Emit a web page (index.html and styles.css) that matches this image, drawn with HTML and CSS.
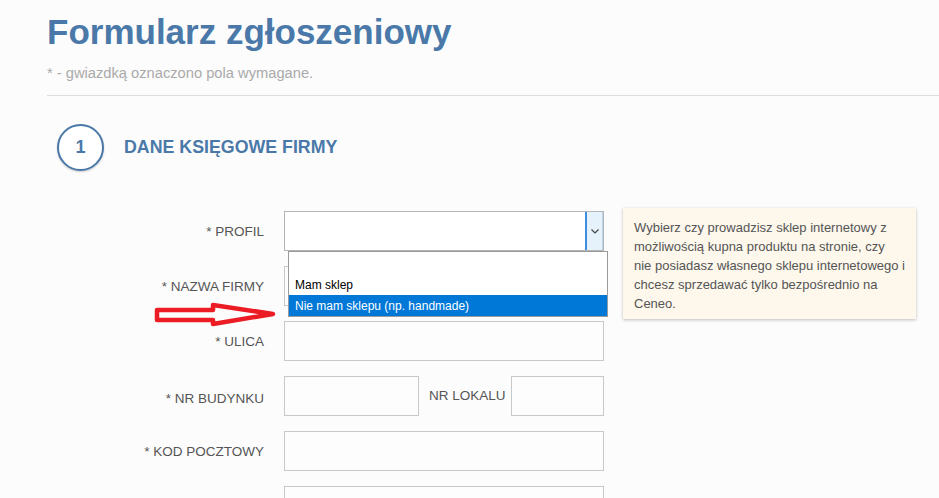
FILE: index.html
```html
<!DOCTYPE html>
<html lang="pl">
<head>
  <meta charset="utf-8">
  <title>Formularz zgłoszeniowy</title>
  <link rel="stylesheet" href="styles.css">
</head>
<body>
  <div class="page">
    <div class="page-head">
      <h1>Formularz zgłoszeniowy</h1>
      <p class="note">* - gwiazdką oznaczono pola wymagane.</p>
    </div>

    <div class="step">
      <div class="step-head">
        <span class="step-num">1</span>
        <h2>DANE KSIĘGOWE FIRMY</h2>
      </div>

      <div class="step-body">
        <div class="fields">
          <div class="row">
            <label class="row-label">* PROFIL</label>
            <div class="select">
              <span class="select-btn">
                <svg width="8" height="5" viewBox="0 0 8 5"><path d="M0.5 0.5 L4 4 L7.5 0.5" fill="none" stroke="#444" stroke-width="1.2"/></svg>
              </span>
              <ul class="select-list">
                <li></li>
                <li>Mam sklep</li>
                <li class="active">Nie mam sklepu (np. handmade)</li>
              </ul>
            </div>
          </div>
          <div class="row">
            <label class="row-label">* NAZWA FIRMY</label>
            <div class="input"></div>
          </div>
          <div class="row">
            <label class="row-label">* ULICA</label>
            <div class="input"></div>
          </div>
          <div class="row">
            <label class="row-label label-low">* NR BUDYNKU</label>
            <div class="pair">
              <div class="input input-short"></div>
              <label class="pair-label">NR LOKALU</label>
              <div class="input input-tail"></div>
            </div>
          </div>
          <div class="row">
            <label class="row-label">* KOD POCZTOWY</label>
            <div class="input"></div>
          </div>
          <div class="row">
            <label class="row-label"></label>
            <div class="input"></div>
          </div>
        </div>

        <div class="hint">
          Wybierz czy prowadzisz sklep internetowy z<br>
          możliwością kupna produktu na stronie, czy<br>
          nie posiadasz własnego sklepu internetowego i<br>
          chcesz sprzedawać tylko bezpośrednio na<br>
          Ceneo.
        </div>
      </div>
    </div>

    <svg class="mark" width="130" height="34" viewBox="150 296 130 34">
      <polygon points="157,310 213,310 213,305 273,314 213,324 213,320 157,320" fill="none" stroke="#ec1c24" stroke-width="4.5" stroke-linejoin="round"/>
    </svg>
  </div>
</body>
</html>
```

FILE: styles.css
```css
html, body {
  margin: 0;
  padding: 0;
  background: #fcfcfc;
  font-family: "Liberation Sans", Arial, sans-serif;
  overflow: hidden;
}

.page {
  position: relative;
  padding-left: 47px;
}

.page-head {
  border-bottom: 1px solid #dddddd;
  padding-bottom: 12px;
}

h1 {
  margin: 0;
  padding-top: 10px;
  font-size: 35px;
  line-height: 44px;
  font-weight: bold;
  color: #4a79a9;
}

.note {
  margin: 9px 0 0;
  font-size: 14.7px;
  line-height: 20px;
  color: #aaaaaa;
}

.step-head {
  display: flex;
  align-items: center;
  margin: 28px 0 0 10px;
}

.step-num {
  display: flex;
  align-items: center;
  justify-content: center;
  width: 43px;
  height: 43px;
  border: 2px solid #4a79a9;
  border-radius: 50%;
  background: #fff;
  box-shadow: 0 1px 2px rgba(0,0,0,.2);
  font-size: 18px;
  font-weight: bold;
  color: #4a79a9;
}

.step-head h2 {
  margin: 0 0 0 20px;
  font-size: 17.8px;
  font-weight: bold;
  color: #4a79a9;
}

.step-body {
  display: flex;
  align-items: flex-start;
  margin-top: 40px;
}

.fields {
  width: 557px;
}

.row {
  display: flex;
  align-items: center;
  margin-bottom: 15px;
}

.row-label {
  width: 217px;
  margin-right: 20px;
  text-align: right;
  font-size: 13.5px;
  color: #555555;
}

.label-low {
  padding-top: 4px;
}

.input,
.select {
  box-sizing: border-box;
  width: 320px;
  height: 40px;
  border: 1px solid #c8c8c8;
  background: #fdfdfd;
}

.select {
  position: relative;
  display: flex;
  justify-content: flex-end;
  border-color: #b4b4b4;
  background: #fff;
}

.select-btn {
  display: flex;
  align-items: center;
  justify-content: center;
  width: 15px;
  border-left: 2px solid #3d8ee0;
  border-right: 1px solid #bcd6f0;
  background: #e5f1fb;
}

.select-list {
  position: absolute;
  top: 39px;
  left: 3px;
  width: 320px;
  box-sizing: border-box;
  margin: 0;
  padding: 0;
  list-style: none;
  border: 1px solid #9a9a9a;
  background: #fff;
  font-size: 12px;
  color: #000;
  z-index: 2;
}

.select-list li {
  height: 21px;
  line-height: 22px;
  padding-left: 6px;
}

.select-list li:first-child {
  height: 22px;
}

.select-list li.active {
  background: #0078d7;
  color: #fff;
}

.pair {
  display: flex;
  align-items: center;
  width: 320px;
}

.input-short {
  width: 135px;
}

.pair-label {
  margin-left: 10px;
  padding-bottom: 2px;
  font-size: 13.5px;
  color: #555555;
}

.input-tail {
  width: 93px;
  margin-left: auto;
}

.hint {
  box-sizing: border-box;
  width: 293px;
  margin: -3px 0 0 19px;
  padding: 10px 8px 6px 11px;
  background: #fdf7ec;
  box-shadow: 0 1px 3px rgba(0,0,0,.25);
  font-size: 13px;
  line-height: 19px;
  color: #555555;
  white-space: nowrap;
}

.mark {
  position: absolute;
  left: 150px;
  top: 296px;
  z-index: 3;
}
```
